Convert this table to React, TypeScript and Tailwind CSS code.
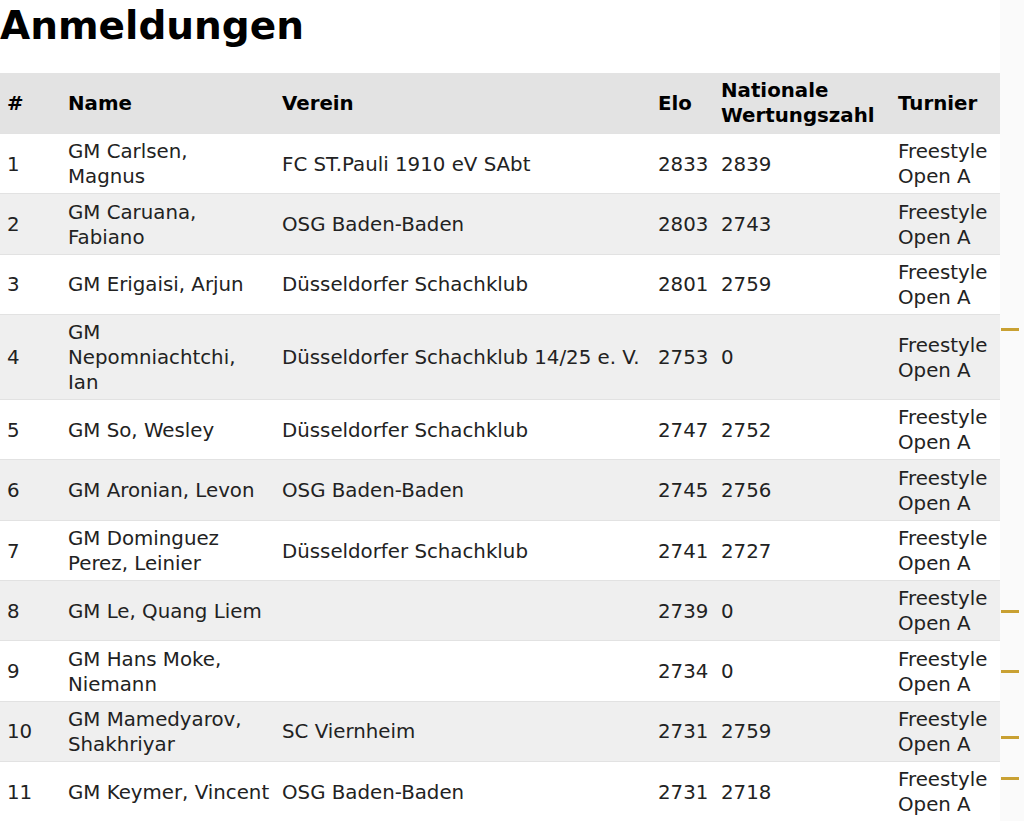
import React from 'react';

interface Entry {
  nr: number;
  name: string;
  verein: string;
  elo: number;
  dwz: number;
  turnier: string;
}

// line breaks in names follow the original column wrapping
const entries: Entry[] = [
  { nr: 1, name: 'GM Carlsen,\nMagnus', verein: 'FC ST.Pauli 1910 eV SAbt', elo: 2833, dwz: 2839, turnier: 'Freestyle\nOpen A' },
  { nr: 2, name: 'GM Caruana,\nFabiano', verein: 'OSG Baden-Baden', elo: 2803, dwz: 2743, turnier: 'Freestyle\nOpen A' },
  { nr: 3, name: 'GM Erigaisi, Arjun', verein: 'Düsseldorfer Schachklub', elo: 2801, dwz: 2759, turnier: 'Freestyle\nOpen A' },
  { nr: 4, name: 'GM\nNepomniachtchi,\nIan', verein: 'Düsseldorfer Schachklub 14/25 e. V.', elo: 2753, dwz: 0, turnier: 'Freestyle\nOpen A' },
  { nr: 5, name: 'GM So, Wesley', verein: 'Düsseldorfer Schachklub', elo: 2747, dwz: 2752, turnier: 'Freestyle\nOpen A' },
  { nr: 6, name: 'GM Aronian, Levon', verein: 'OSG Baden-Baden', elo: 2745, dwz: 2756, turnier: 'Freestyle\nOpen A' },
  { nr: 7, name: 'GM Dominguez\nPerez, Leinier', verein: 'Düsseldorfer Schachklub', elo: 2741, dwz: 2727, turnier: 'Freestyle\nOpen A' },
  { nr: 8, name: 'GM Le, Quang Liem', verein: '', elo: 2739, dwz: 0, turnier: 'Freestyle\nOpen A' },
  { nr: 9, name: 'GM Hans Moke,\nNiemann', verein: '', elo: 2734, dwz: 0, turnier: 'Freestyle\nOpen A' },
  { nr: 10, name: 'GM Mamedyarov,\nShakhriyar', verein: 'SC Viernheim', elo: 2731, dwz: 2759, turnier: 'Freestyle\nOpen A' },
  { nr: 11, name: 'GM Keymer, Vincent', verein: 'OSG Baden-Baden', elo: 2731, dwz: 2718, turnier: 'Freestyle\nOpen A' },
];

const Anmeldungen = () => {
  return (
    <div className="flex min-h-[821px] bg-white text-[19.8px] leading-[25px] text-[#222]" style={{ fontFamily: '"DejaVu Sans", Verdana, sans-serif' }}>
      <main className="w-[1000px] shrink-0">
        <h1 className="m-0 pt-[2px] text-[39px] leading-[48px] font-bold text-black">Anmeldungen</h1>
        <table className="mt-[23px] w-[1000px] table-fixed border-collapse">
          <thead>
            <tr className="bg-[#e3e3e3] text-left text-black">
              <th className="w-[61px] px-[7px] py-[5px] font-bold">#</th>
              <th className="w-[214px] px-[7px] py-[5px] font-bold">Name</th>
              <th className="w-[376px] px-[7px] py-[5px] font-bold">Verein</th>
              <th className="w-[63px] px-[7px] py-[5px] font-bold">Elo</th>
              <th className="w-[177px] px-[7px] py-[5px] font-bold">Nationale<br />Wertungszahl</th>
              <th className="px-[7px] py-[5px] font-bold">Turnier</th>
            </tr>
          </thead>
          <tbody>
            {entries.map((e) => (
              <tr key={e.nr} className={`border-t border-[#e2e2e2] ${e.nr % 2 === 0 ? 'bg-[#efefef]' : 'bg-white'}`}>
                <td className="px-[7px] pt-[5.3px] pb-[4px]">{e.nr}</td>
                <td className="pl-[7px] pr-0 pt-[5.3px] pb-[4px] whitespace-pre-line">{e.name}</td>
                <td className="px-[7px] pt-[5.3px] pb-[4px] whitespace-nowrap">{e.verein}</td>
                <td className="px-[7px] pt-[5.3px] pb-[4px]">{e.elo}</td>
                <td className="px-[7px] pt-[5.3px] pb-[4px]">{e.dwz}</td>
                <td className="px-[7px] pt-[5.3px] pb-[4px] whitespace-pre-line">{e.turnier}</td>
              </tr>
            ))}
          </tbody>
        </table>
      </main>
      <aside className="flex flex-1 flex-col bg-[#fafafa]">
        <div className="mt-[328px] ml-[1px] h-[3px] w-[18px] bg-[#c9a133]" />
        <div className="mt-[279px] ml-[1px] h-[3px] w-[18px] bg-[#c9a133]" />
        <div className="mt-[57px] ml-[1px] h-[3px] w-[18px] bg-[#c9a133]" />
        <div className="mt-[63px] ml-[1px] h-[3px] w-[18px] bg-[#c9a133]" />
        <div className="mt-[38px] ml-[1px] h-[3px] w-[18px] bg-[#c9a133]" />
      </aside>
    </div>
  );
};

export default Anmeldungen;
